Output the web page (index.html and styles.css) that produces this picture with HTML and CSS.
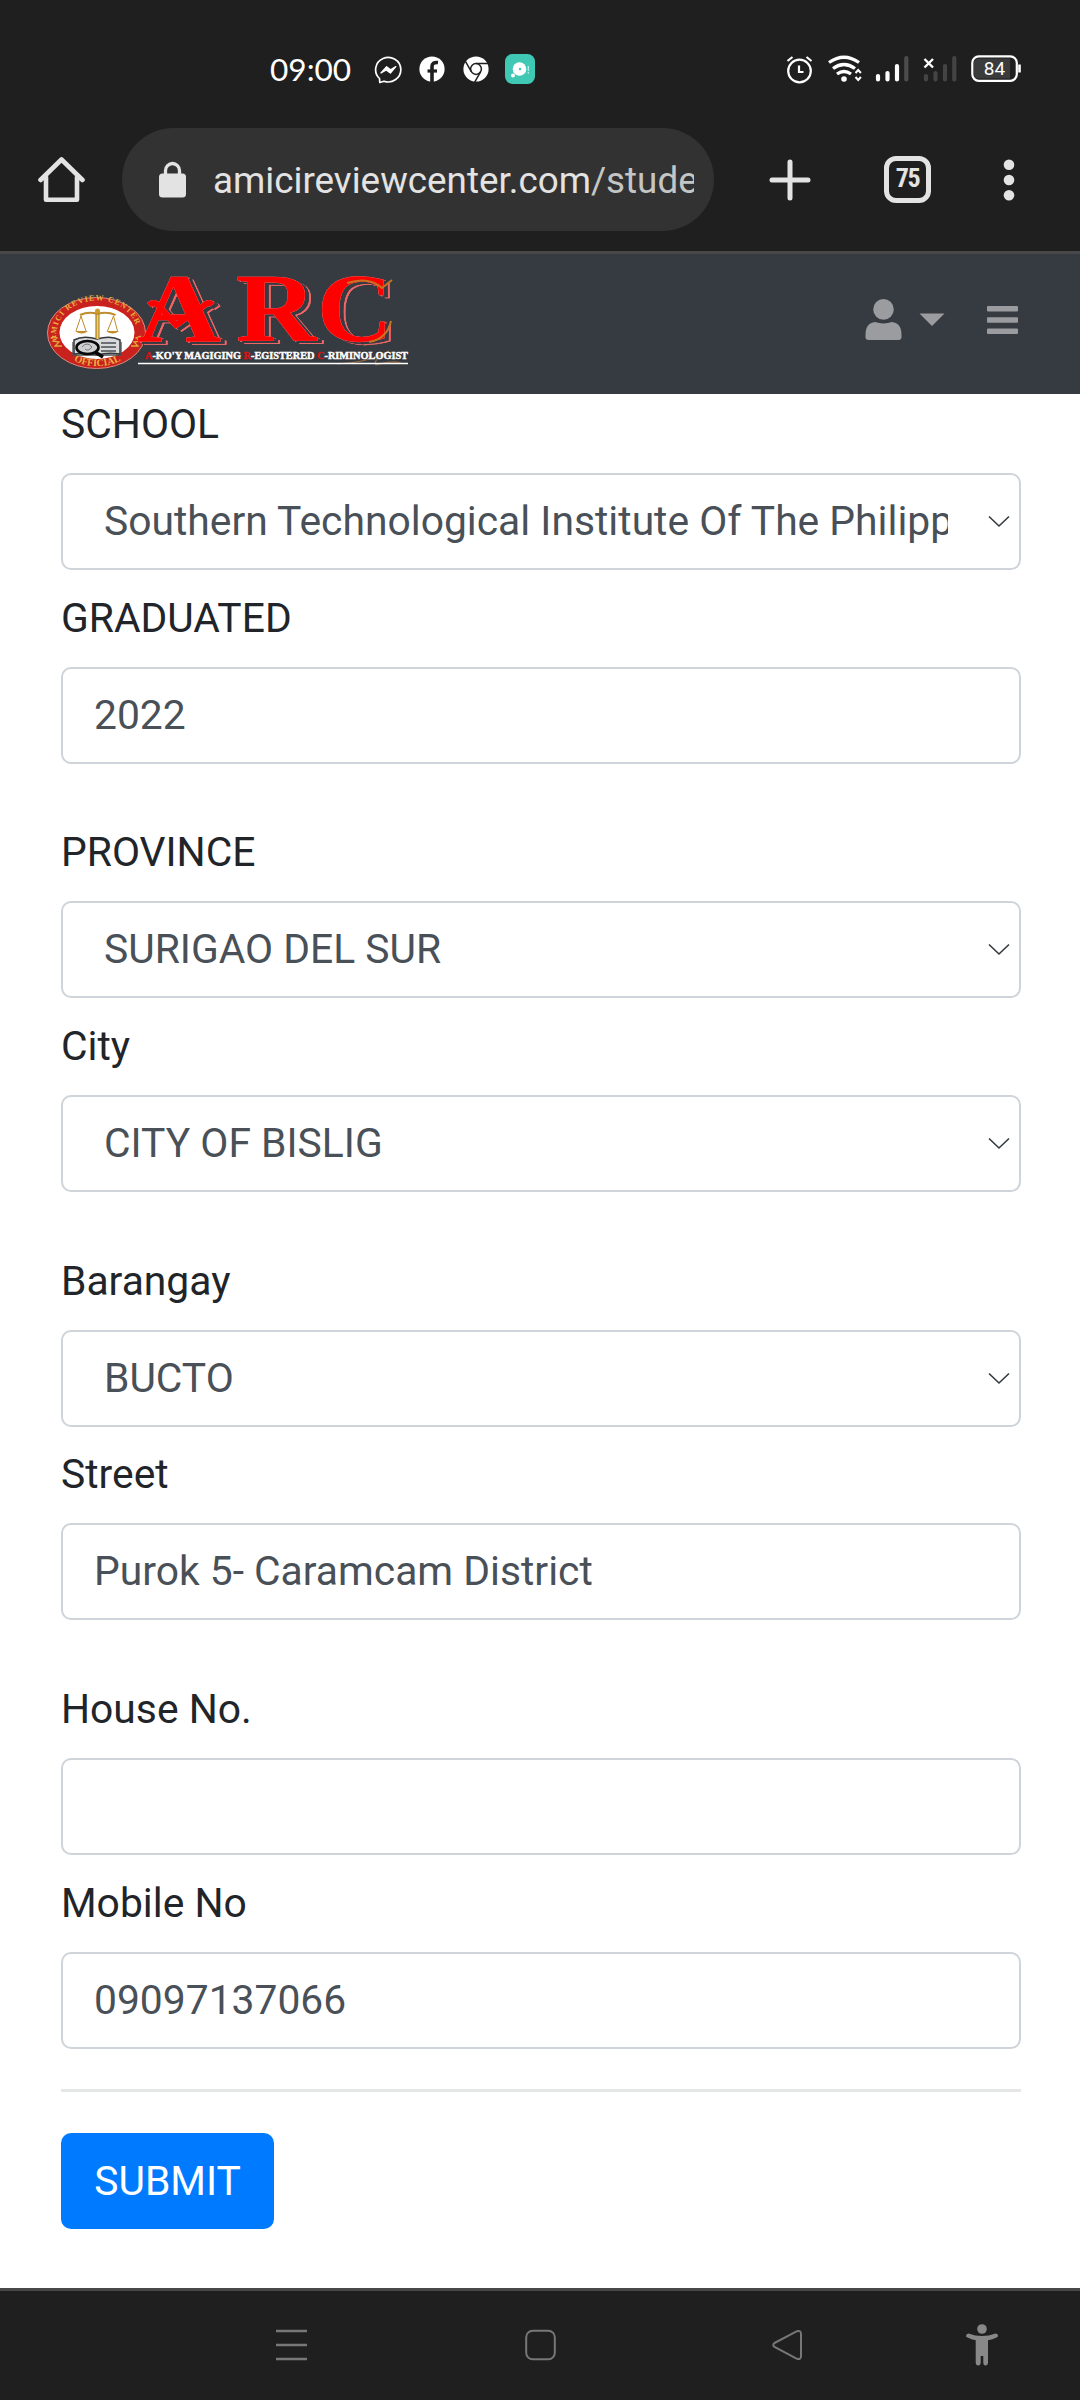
FILE: index.html
```html
<!DOCTYPE html>
<html lang="en">
<head>
<meta charset="utf-8">
<title>Student Profile</title>
<link rel="stylesheet" href="styles.css">
</head>
<body>
<header class="status">
  <span class="clock">09:00</span>
  <div class="status-left">
    <svg width="29" height="30" viewBox="374 54 29 30"><path d="M379.500 78.500A12.600 12.200 0 1 1 384 81.200L379.800 82.500Z" fill="none" stroke="#fff" stroke-width="1.700" stroke-linejoin="round"/><path d="M381 73l5.600-6.200 4 3 5.200-3.200-5.400 6.400-4.200-3z" fill="#fff" stroke="#fff" stroke-width="1.300" stroke-linejoin="round"/></svg>
    <svg width="29" height="30" viewBox="418 54 29 30"><circle cx="432" cy="69" r="12.600" fill="#fff"/><path d="M432 83v-20.500q0-4.500 6-4" transform="translate(0 4)" fill="none" stroke="#1f1f1f" stroke-width="3.600"/><path d="M427.500 71h9.500" stroke="#1f1f1f" stroke-width="3.200"/></svg>
    <svg width="28" height="30" viewBox="462 54 28 30"><circle cx="476" cy="69" r="12.600" fill="#fff"/><g fill="none" stroke="#1f1f1f" stroke-width="1.500"><circle cx="476" cy="69" r="5.400"/><path d="M476 63.600h12M471.300 71.700l-6-10.500M480.700 71.700l-6 10.500"/></g></svg>
    <svg width="30" height="30" viewBox="0 0 30 30"><rect width="30" height="30" rx="7.500" fill="#3fc8b4"/><circle cx="14.500" cy="15" r="6.800" fill="#fff"/><circle cx="15" cy="15" r="1.200" fill="#3fc8b4"/><circle cx="8" cy="21.500" r="2" fill="#fff"/><path d="M23.300 12v5M23.300 18v1.500" stroke="#bdf0e8" stroke-width="1.300"/></svg>
  </div>
  <div class="status-right">
    <svg width="29" height="30" viewBox="786 54 29 30"><g fill="none" stroke="#fff" stroke-width="2.200"><circle cx="799.500" cy="71" r="11.300"/><path d="M799 65.500v6.500h4.500M787.500 61l5-4M806.500 57l5 4"/></g></svg>
    <svg width="34" height="30" viewBox="828 54 34 30"><g fill="none" stroke="#fff" stroke-width="3.300"><path d="M829 62.500q15-10.500 30 0M833 68.500q11-8 22 0M837 74q7-5 14 0"/></g><circle cx="844" cy="79" r="2.800" fill="#fff"/><path d="M855.500 73l2.700-3 2.700 3M855.500 77l2.700 3 2.700-3" fill="none" stroke="#fff" stroke-width="2"/></svg>
    <svg width="35" height="30" viewBox="875 54 35 30"><g stroke-width="4.200" stroke-linecap="round"><path d="M878 76v3.500M887.500 73v6.500M897 66v13.500" stroke="#fff"/><path d="M906.300 58v21.500" stroke="#4c4c4c"/></g></svg>
    <svg width="35" height="30" viewBox="923 54 35 30"><g stroke-width="4.200" stroke-linecap="round" stroke="#444"><path d="M926 76v3.500M935.500 73v6.500M945 66v13.500M954.300 58v21.500"/></g><path d="M924.500 59l8.500 8.500M933 59l-8.500 8.500" stroke="#fff" stroke-width="2.400"/></svg>
    <svg width="51" height="30" viewBox="971 54 51 30"><rect x="972.300" y="56.300" width="44.500" height="24.500" rx="6.500" fill="none" stroke="#fff" stroke-width="2.200"/><path d="M977 58.500h33v20h-33q-3-1-3-5v-10q0-4 3-5z" fill="#3b3b3b"/><path d="M1019.500 64.500v8" stroke="#fff" stroke-width="2.600"/><text x="994.500" y="74.500" text-anchor="middle" class="battery">84</text></svg>
  </div>
</header>

<div class="toolbar">
  <svg class="home" width="48" height="48" viewBox="37 156 48 48"><path d="M40.500 180L61.500 159.500 82.500 180M46 177v22.700h31V177" fill="none" stroke="#e3e3e3" stroke-width="4.600" stroke-linecap="round" stroke-linejoin="round"/></svg>
  <div class="omnibox">
    <svg width="28" height="38" viewBox="159 160 28 38"><rect x="159" y="172.500" width="27" height="24" rx="3.500" fill="#e3e3e3"/><path d="M165.500 174v-4.500a7 7 0 0 1 14 0v4.500" fill="none" stroke="#e3e3e3" stroke-width="3.300"/></svg>
    <span class="url">amicireviewcenter.com<span class="path">/studen</span></span>
  </div>
  <svg class="plus" width="42" height="42" viewBox="0 0 42 42"><path d="M21 3v36M3 21h36" stroke="#e3e3e3" stroke-width="5" stroke-linecap="round"/></svg>
  <div class="tabs">75</div>
  <svg class="more" width="12" height="42" viewBox="0 0 12 42"><g fill="#e3e3e3"><circle cx="6" cy="5.700" r="5.300"/><circle cx="6" cy="21" r="5.300"/><circle cx="6" cy="36.300" r="5.300"/></g></svg>
</div>

<nav class="navbar">
  <svg class="logo" width="430" height="140" viewBox="0 254 430 140">
    <defs>
      <path id="arc-top" d="M56 341C53 287 141 287 138 341"/>
      <path id="arc-bottom" d="M57 343C70 374 124 374 138 343"/>
      <linearGradient id="gold" x1="0" y1="0" x2="1" y2="0"><stop offset="0" stop-color="#8f6516"/><stop offset=".5" stop-color="#f1cf61"/><stop offset="1" stop-color="#a1731c"/></linearGradient>
    </defs>
    <ellipse cx="96.500" cy="333" rx="49" ry="35.500" fill="#c9211e" stroke="#df8a7c" stroke-width="1"/>
    <ellipse cx="97" cy="332.500" rx="37.500" ry="26.500" fill="#fff"/>
    <text class="seal"><textPath href="#arc-top" textLength="114">AMICI REVIEW CENTER</textPath></text>
    <text class="seal big"><textPath href="#arc-bottom" startOffset="50%" text-anchor="middle">OFFICIAL</textPath></text>
    <path d="M52 336l5 2-4 3 6 1-4 4 7 0M141 336l-5 2 4 3-6 1 4 4-7 0" fill="none" stroke="#dfaa3d" stroke-width="1.300"/>
    <path d="M74 340q9-5 23-1 14-4 23 1v14q-12-2-23 1-11-3-23-1z" fill="#d8dadb" stroke="#34393b" stroke-width="1.500"/>
    <path d="M73 342v13h48v-13M101 343h15M101 347h15M101 351h15" fill="none" stroke="#4a4f52" stroke-width="1.300"/>
    <path d="M95.500 311h4v28h-4z" fill="url(#gold)"/>
    <g fill="none" stroke="#c08c2c"><path d="M80 315q9-4 17.500-1 9-3 18 1" stroke-width="2"/><path d="M81 316l-5 15M81 316l5 15M113.500 316l-6 15M113.500 316l4 15" stroke-width="1"/></g>
    <path d="M75 331h13q-6 5-13 0zM106 331h13q-6 5-13 0z" fill="#c28c28"/><circle cx="97.500" cy="311" r="2.500" fill="#cf9a30"/>
    <ellipse cx="87.500" cy="347.500" rx="11" ry="6.500" fill="#c8c8c8" fill-opacity=".6" stroke="#080808" stroke-width="2.600"/>
    <path d="M95 352l8 5" stroke="#080808" stroke-width="3.500"/><path d="M82 347q5-6 10 0-4 5-7 2" stroke="#777" fill="none"/>
    <g class="arc">
      <text transform="translate(137 341) scale(1.200 1)">A</text>
      <path class="bar" d="M149 305q5-4 10 1l17 19 30-21q4-2 6 1"/>
      <text transform="translate(236 341) scale(1.150 1)">R</text>
      <text transform="translate(317 341) scale(1.080 1)">C</text>
    </g>
    <path d="M347 283q22-7 35 5l10-8M391 321q-4 18-22 21" fill="none" stroke="#c87321" stroke-width="2"/>
    <path d="M337 364q30-1 52-13-17 9-13 14 17-5 25-2" fill="none" stroke="#93683e" stroke-width="1.200"/>
    <text class="tagline" x="145" y="358.500" textLength="263" lengthAdjust="spacingAndGlyphs"><tspan class="red">A</tspan>-KO'Y MAGIGING <tspan class="red">R</tspan>-EGISTERED <tspan class="red">C</tspan>-RIMINOLOGIST</text>
    <path d="M138 363.500h270" stroke="#fff" stroke-width="1.500"/>
  </svg>
  <div class="nav-icons">
    <svg width="37" height="42" viewBox="865 300 37 42"><circle cx="883.500" cy="310.400" r="10.300"/><path d="M875 323q8.500 2.800 17 0 9.500 1 9.500 13v2q0 3-3 3h-30q-3 0-3-3v-2q0-12 9.500-13z"/></svg>
    <svg class="caret" width="26" height="14" viewBox="0 0 26 14"><path d="M.5.500h25L13 13z"/></svg>
    <svg class="bars" width="31" height="28" viewBox="0 0 31 28"><rect width="31" height="5.600" rx="1"/><rect y="11.200" width="31" height="5.600" rx="1"/><rect y="22.400" width="31" height="5.600" rx="1"/></svg>
  </div>
</nav>

<main class="form">
  <section class="group">
    <div class="field"><div class="label">SCHOOL</div><div class="control select"><span class="value">Southern Technological Institute Of The Philippines</span><svg class="chevron" width="22" height="13" viewBox="0 0 22 13"><path d="M1 1.500l10 9.500L21 1.500"/></svg></div></div>
    <div class="field"><div class="label">GRADUATED</div><div class="control">2022</div></div>
  </section>
  <section class="group">
    <div class="field"><div class="label">PROVINCE</div><div class="control select"><span class="value">SURIGAO DEL SUR</span><svg class="chevron" width="22" height="13" viewBox="0 0 22 13"><path d="M1 1.500l10 9.500L21 1.500"/></svg></div></div>
    <div class="field"><div class="label">City</div><div class="control select"><span class="value">CITY OF BISLIG</span><svg class="chevron" width="22" height="13" viewBox="0 0 22 13"><path d="M1 1.500l10 9.500L21 1.500"/></svg></div></div>
  </section>
  <section class="group">
    <div class="field"><div class="label">Barangay</div><div class="control select"><span class="value">BUCTO</span><svg class="chevron" width="22" height="13" viewBox="0 0 22 13"><path d="M1 1.500l10 9.500L21 1.500"/></svg></div></div>
    <div class="field"><div class="label">Street</div><div class="control">Purok 5- Caramcam District</div></div>
  </section>
  <section class="group">
    <div class="field"><div class="label">House No.</div><div class="control"></div></div>
    <div class="field"><div class="label">Mobile No</div><div class="control">09097137066</div></div>
  </section>
  <hr class="rule">
  <button class="submit" type="button">SUBMIT</button>
</main>

<footer class="system-nav">
  <svg width="31" height="32" viewBox="0 0 31 32"><path d="M0 2h31M0 16h31M0 30h31" stroke="#777" stroke-width="2.600"/></svg>
  <svg class="nav-home" width="31" height="32" viewBox="0 0 31 32"><rect x="1.200" y="1.700" width="28.600" height="28.600" rx="6.500" fill="none" stroke="#777" stroke-width="2"/></svg>
  <svg class="nav-back" width="31" height="32" viewBox="0 0 31 32"><path d="M2.500 14L25 2.200q4-1.200 4 2.800v22q0 4-4 2.800L2.500 18q-2.500-2 0-4z" fill="none" stroke="#777" stroke-width="2"/></svg>
  <svg class="nav-access" width="32" height="42" viewBox="0 0 32 42"><g fill="#888"><circle cx="16" cy="5" r="4.800"/><path d="M2.500 9.500q13.500 5 27 0 2.500 0 2.500 2.500-.3 1-1.500 1.600-4 2-8.500 2.700V39q-.3 2.500-2.500 2.500T17.300 39v-7h-2.600v7q-.3 2.500-2.500 2.500T9.700 39V16.300Q5.500 15.600 1.500 13.600 0 13 0 12q.2-2.500 2.500-2.500z"/></g></svg>
</footer>
</body>
</html>
```
FILE: styles.css
```css
* { box-sizing: border-box; }
body {
  margin: 0;
  width: 1080px;
  height: 2400px;
  display: flex;
  flex-direction: column;
  overflow: hidden;
  background: #fff;
  font-family: Roboto, "Liberation Sans", sans-serif;
  font-size: 40.8px;
  line-height: 61.2px;
  color: #212529;
}
svg { display: block; flex: none; }

.status {
  height: 108px;
  flex: none;
  display: flex;
  align-items: center;
  padding: 30px 58px 0 270px;
  background: #1f1f1f;
}
.clock {
  width: 89px;
  font: 31.6px/40px Lato, sans-serif;
  color: #fff;
  white-space: nowrap;
}
.status-left { display: flex; gap: 15px; margin-left: 15px; }
.status-right { display: flex; gap: 13px; margin-left: auto; }
.battery { font: 19px Roboto, sans-serif; fill: #fff; }

.toolbar {
  height: 146px;
  flex: none;
  display: flex;
  align-items: center;
  padding: 0 65px 0 37px;
  background: #1f1f1f;
  border-bottom: 3px solid #484848;
}
.omnibox {
  width: 592px;
  height: 103px;
  margin-left: 37px;
  padding: 0 20px 0 37px;
  display: flex;
  align-items: center;
  gap: 26px;
  border-radius: 52px;
  background: #323232;
}
.url {
  flex: 1;
  overflow: hidden;
  white-space: nowrap;
  font-size: 36.8px;
  padding-top: 3px;
  color: #e3e3e3;
}
.path { color: #c4c6c5; }
.plus { margin-left: 55px; }
.tabs {
  width: 47px;
  height: 47px;
  margin-left: 73px;
  border: 5px solid #e3e3e3;
  border-radius: 12px;
  color: #e3e3e3;
  font: bold 26px/35px "Roboto Condensed", Roboto, sans-serif;
  letter-spacing: -1.5px;
  text-align: center;
}
.more { margin-left: auto; }

.navbar {
  height: 140px;
  flex: none;
  display: flex;
  align-items: center;
  justify-content: space-between;
  padding-right: 62px;
  background: #363a41;
}
.seal { font: bold 8px "Liberation Serif", serif; fill: #e8b13e; }
.seal.big { font-size: 10px; }
.arc {
  fill: #f00;
  stroke: #f00;
  stroke-width: .3;
  filter: drop-shadow(0 0 .5px #fbb) drop-shadow(4px 2px 0 #363a41) drop-shadow(2px 1.2px 0 #e66);
}
.arc text { font: bold 97px "Liberation Serif", serif; }
.bar { fill: none; stroke-width: 6; }
.tagline { font: bold 9.5px "Liberation Serif", serif; fill: #fff; stroke: #fff; stroke-width: .4; }
.red { fill: #d81414; stroke: #d81414; }
.nav-icons { display: flex; align-items: center; fill: #9a9c9f; padding-bottom: 9px; }
.caret { margin-left: 17px; }
.bars { margin-left: 42px; }

.form { flex: 1; padding: 0 59px 0 61px; }
.group { margin-bottom: 40.95px; }
.field { padding-bottom: 17.6px; }
.label { height: 79.2px; }
.control {
  display: flex;
  align-items: center;
  height: 96.9px;
  padding: 0 9px 0 31px;
  border: 2px solid #ced4da;
  border-radius: 10px;
  color: #495057;
}
.select { padding-left: 41px; justify-content: space-between; }
.value { width: 844px; overflow: hidden; white-space: nowrap; }
.chevron { fill: none; stroke: #343a40; stroke-width: 1.6; }
.rule {
  height: 3px;
  margin: -18px 0 41px;
  border: 0;
  background: #e5e6e6;
}
.submit {
  display: block;
  width: 213px;
  height: 96px;
  padding: 0;
  border: 0;
  border-radius: 10px;
  background: #007bff;
  color: #fff;
  font: 40.8px/61.2px Roboto, sans-serif;
}

.system-nav {
  height: 112px;
  flex: none;
  display: flex;
  align-items: center;
  padding: 0 0 2px 276px;
  border-top: 3px solid #484848;
  background: #1f1f1f;
}
.nav-home { margin-left: 218px; }
.nav-back { margin-left: 216px; }
.nav-access { margin-left: 163px; }
```
